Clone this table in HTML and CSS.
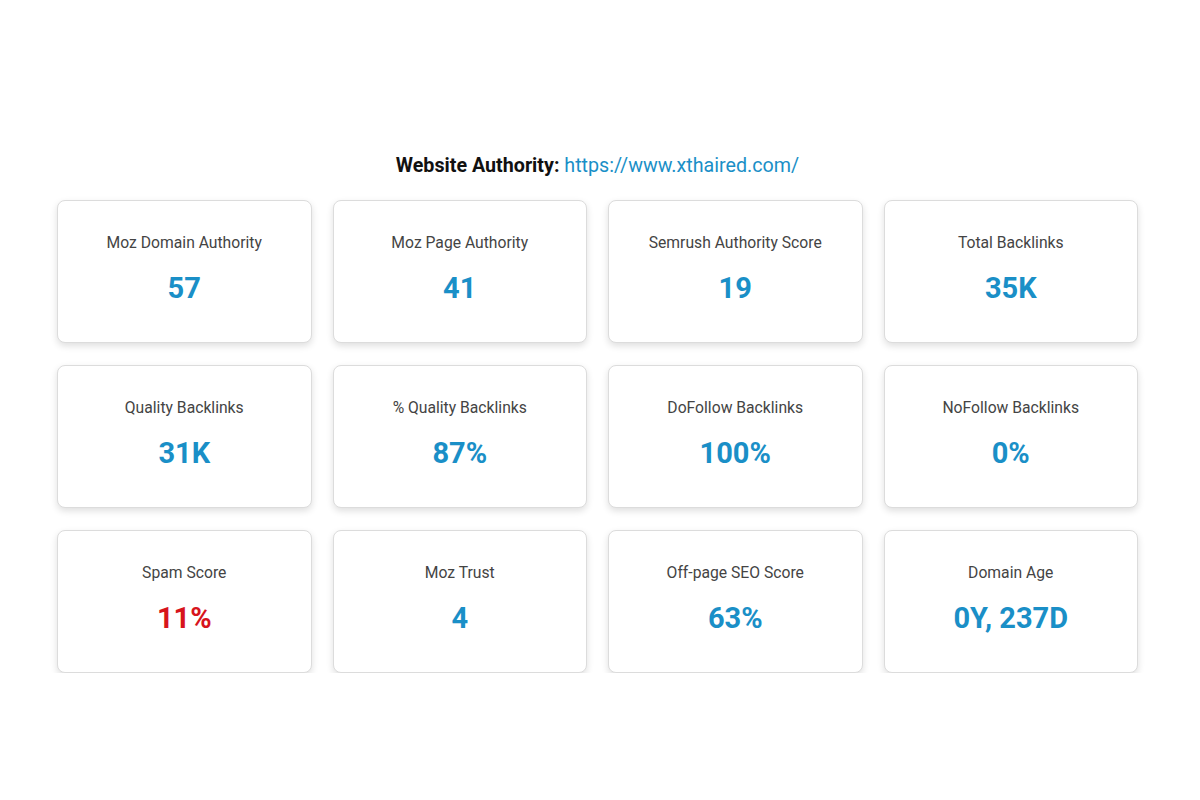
FILE: index.html
```html
<!DOCTYPE html>
<html>
<head>
<meta charset="utf-8">
<link rel="stylesheet" href="styles.css">
</head>
<body>
<main class="wrap">
  <h2 class="title"><strong>Website Authority:</strong> <a class="url" href="#">https://www.xthaired.com/</a></h2>
  <section class="grid">
    <div class="card"><div class="label">Moz Domain Authority</div><div class="value">57</div></div>
    <div class="card"><div class="label">Moz Page Authority</div><div class="value">41</div></div>
    <div class="card"><div class="label">Semrush Authority Score</div><div class="value">19</div></div>
    <div class="card"><div class="label">Total Backlinks</div><div class="value">35K</div></div>
    <div class="card"><div class="label">Quality Backlinks</div><div class="value">31K</div></div>
    <div class="card"><div class="label">% Quality Backlinks</div><div class="value">87%</div></div>
    <div class="card"><div class="label">DoFollow Backlinks</div><div class="value">100%</div></div>
    <div class="card"><div class="label">NoFollow Backlinks</div><div class="value">0%</div></div>
    <div class="card"><div class="label">Spam Score</div><div class="value red">11%</div></div>
    <div class="card"><div class="label">Moz Trust</div><div class="value">4</div></div>
    <div class="card"><div class="label">Off-page SEO Score</div><div class="value">63%</div></div>
    <div class="card"><div class="label">Domain Age</div><div class="value">0Y, 237D</div></div>
  </section>
</main>
</body>
</html>
```
FILE: styles.css
```css
* { box-sizing: border-box; }
html, body { margin: 0; padding: 0; background: #fff; }
body { font-family: Roboto, "Noto Sans", Arial, sans-serif; color: #222; }
.wrap { width: 1081px; margin: 0 0 0 57px; padding-top: 153px; }
.title {
  margin: 0 0 22px;
  text-align: center;
  font-size: 19.7px;
  line-height: 25px;
  font-weight: 400;
  color: #111;
}
.title strong { font-weight: 700; color: #111; }
.url { color: #1a8fc7; text-decoration: none; }
.grid {
  display: grid;
  grid-template-columns: repeat(4, 1fr);
  column-gap: 21px;
  row-gap: 22px;
}
.card {
  height: 143px;
  border: 1px solid #dcdcdc;
  border-radius: 8px;
  background: #fff;
  box-shadow: 0 3px 7px rgba(0,0,0,0.13);
  text-align: center;
  padding-top: 32px;
}
.label {
  font-size: 15.7px;
  line-height: 19px;
  color: #444;
}
.value {
  margin-top: 19px;
  font-size: 29px;
  line-height: 35px;
  font-weight: 700;
  color: #1a8fc7;
}
.value.red { color: #d7141c; }
```
